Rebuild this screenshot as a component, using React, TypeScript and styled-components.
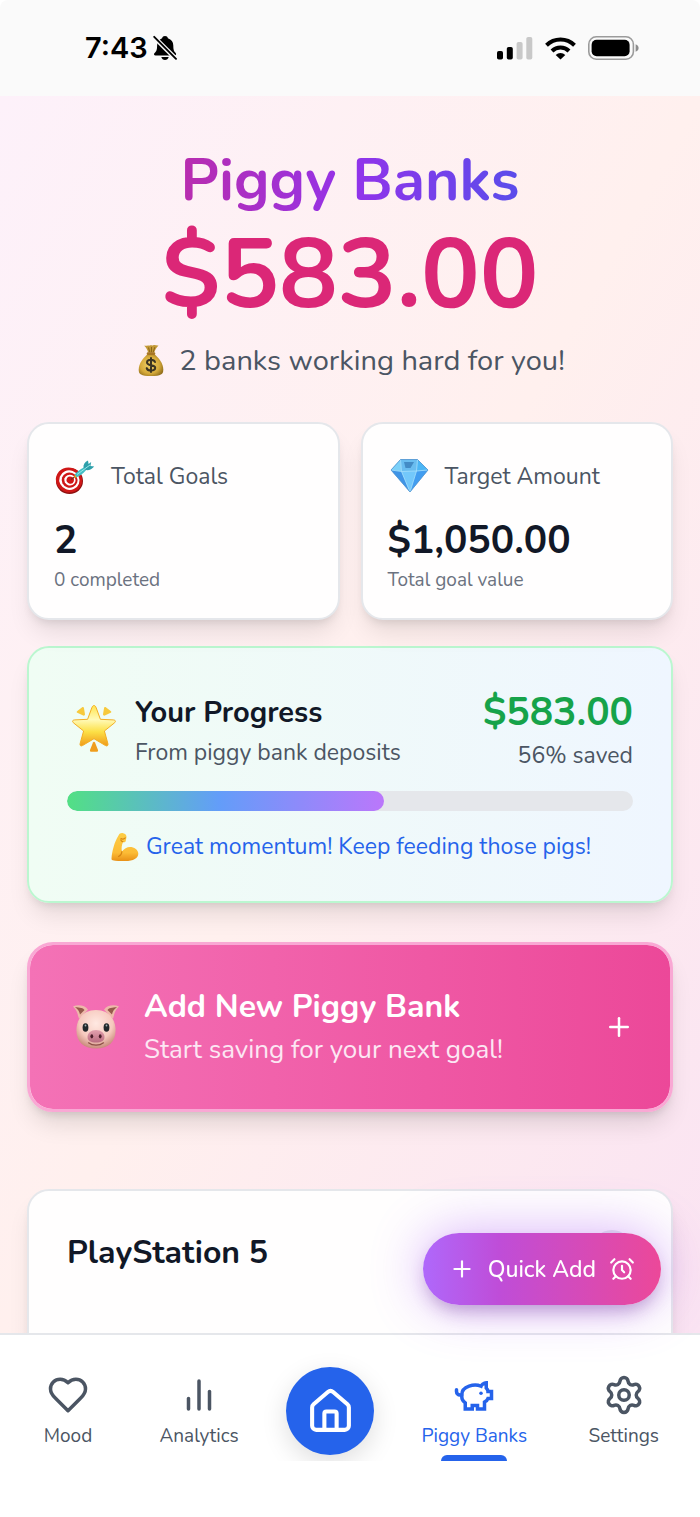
import React from "react";
import styled, { createGlobalStyle } from "styled-components";
import { AlarmClock, House, Plus, Settings } from "lucide-react";

const GlobalStyle = createGlobalStyle`
  *, *::before, *::after { box-sizing: border-box; }
  html, body { margin: 0; background: #ffffff; }
  body {
    font-family: Nunito, Lato, "Open Sans", sans-serif;
    color: #111827;
    -webkit-font-smoothing: antialiased;
  }
  h1, h2, p { margin: 0; }
  button { font: inherit; cursor: pointer; }
`;

const Screen = styled.div`
  display: flex;
  flex-direction: column;
  height: 100vh;
  overflow: hidden;
`;

const StatusBar = styled.header`
  flex: none;
  display: flex;
  align-items: center;
  justify-content: space-between;
  height: 96px;
  padding: 0 61px 0 85px;
  border-radius: 8px 8px 0 0;
  background: #fafafa;
  color: #000000;
`;

const StatusGroup = styled.div<{ $gap: number }>`
  display: flex;
  align-items: center;
  gap: ${(p) => p.$gap}px;
`;

const Time = styled.time`
  font: 600 29px/36px Inter, "Liberation Sans", sans-serif;
`;

const Content = styled.main`
  flex: 1;
  min-height: 0;
  overflow-y: auto;
  scrollbar-width: none;
  padding: 49px 27px 0;
  background: linear-gradient(to bottom right, #fdf1fa, #fff0ee 50%, #fae3f2);
`;

const Hero = styled.section`
  display: flex;
  flex-direction: column;
  text-align: center;
`;

const Title = styled.h1`
  font-size: 59px;
  line-height: 72px;
  font-weight: 700;
  background: linear-gradient(90deg, #db2777, #9333ea, #2563eb);
  background-clip: text;
  -webkit-background-clip: text;
  color: transparent;
`;

const Balance = styled.p`
  margin-top: 8px;
  font-size: 98px;
  line-height: 100px;
  font-weight: 700;
  color: #db2777;
`;

const Tagline = styled.p`
  display: flex;
  align-items: center;
  justify-content: center;
  gap: 14px;
  margin-top: 14px;
  font-size: 29px;
  line-height: 44px;
  color: #4b5563;
`;

const Card = styled.section`
  border: 2px solid #e5e7eb;
  border-radius: 22px;
  background: #fffefe;
  box-shadow: 0 16px 24px -5px rgba(0, 0, 0, 0.1), 0 6px 10px -4px rgba(0, 0, 0, 0.1);
`;

const Stats = styled.div`
  display: grid;
  grid-template-columns: 1fr 1fr;
  gap: 21px;
  margin-top: 39px;
`;

const StatCard = styled(Card)`
  padding: 25px 25px 24px;
`;

const StatHead = styled.div`
  display: flex;
  align-items: center;
  gap: 15px;
  height: 56px;
  margin-bottom: 11px;
`;

const Body = styled.p<{ $color?: string }>`
  font-size: 23px;
  line-height: 34px;
  color: ${(p) => p.$color ?? "#4b5563"};
`;

const Figure = styled.p<{ $color?: string }>`
  font-size: 39px;
  line-height: 50px;
  font-weight: 700;
  color: ${(p) => p.$color ?? "#111827"};
`;

const Caption = styled.p`
  font-size: 19px;
  line-height: 28px;
  color: #6b7280;
`;

const ProgressCard = styled(Card)`
  margin-top: 26px;
  padding: 40px 38px 37px;
  border-color: #bbf7d0;
  background: linear-gradient(90deg, #f0fdf4, #eff6ff);
`;

const Row = styled.div`
  display: flex;
  align-items: center;
  justify-content: space-between;
`;

const TopRow = styled(Row)`
  align-items: flex-start;
`;

const Lead = styled.div<{ $gap: number }>`
  display: flex;
  align-items: center;
  gap: ${(p) => p.$gap}px;
`;

const Stack = styled.div<{ $gap: number }>`
  display: flex;
  flex-direction: column;
  gap: ${(p) => p.$gap}px;
`;

const CardTitle = styled.h2<{ $size: number; $line?: number }>`
  font-size: ${(p) => p.$size}px;
  line-height: ${(p) => p.$line ?? 42}px;
  font-weight: 700;
`;

const Amounts = styled(Stack)`
  text-align: right;
`;

const Track = styled.div`
  height: 20px;
  margin-top: 18px;
  border-radius: 10px;
  overflow: hidden;
  background: #e5e7eb;
`;

const Fill = styled.div`
  height: 100%;
  border-radius: 10px;
  background: linear-gradient(90deg, #52e084, #639df9 48%, #bb77fb);
`;

const Cheer = styled.div`
  display: flex;
  align-items: center;
  justify-content: center;
  gap: 7px;
  margin-top: 19px;
`;

const AddButton = styled.button`
  display: flex;
  align-items: center;
  justify-content: space-between;
  width: 100%;
  margin-top: 39px;
  padding: 41px 36px 41px 37px;
  border: 3px solid #f9a8d4;
  border-radius: 26px;
  background: linear-gradient(90deg, #f472b6, #ec4899) padding-box;
  color: #ffffff;
  text-align: left;
  box-shadow: 0 16px 24px -5px rgba(0, 0, 0, 0.12), 0 6px 10px -4px rgba(0, 0, 0, 0.12);
`;

const AddHint = styled.p`
  font-size: 26px;
  line-height: 36px;
  color: #fce7f3;
`;

const GoalCard = styled(Card)`
  min-height: 400px;
  margin-top: 77px;
  padding: 39px 38px;
`;

const MoreButton = styled.button`
  width: 42px;
  height: 42px;
  border: 0;
  border-radius: 50%;
  background: #e5e7eb;
`;

const QuickAdd = styled.button`
  position: fixed;
  right: 39px;
  bottom: 212px;
  z-index: 2;
  display: flex;
  align-items: center;
  gap: 13px;
  height: 72px;
  padding: 0 26px;
  border: 0;
  border-radius: 36px;
  background: linear-gradient(90deg, #af68fb, #bf4dd8 32%, #ec4899);
  color: #ffffff;
  font-size: 23px;
  font-weight: 500;
  box-shadow: 0 10px 17px -4px rgba(80, 20, 120, 0.3), 0 0 52px rgba(168, 85, 247, 0.46);
`;

const Nav = styled.nav`
  flex: none;
  height: 184px;
  border-top: 2px solid #e5e7eb;
  background: #ffffff;
`;

const NavList = styled.div`
  display: flex;
  justify-content: space-between;
  height: 126px;
  padding: 0 27px 0 24px;
  overflow: hidden;
`;

const NavItem = styled.a<{ $active?: boolean }>`
  position: relative;
  display: flex;
  flex-direction: column;
  align-items: center;
  gap: 6px;
  min-width: 88px;
  padding: 39px 14px 0;
  font-size: 19px;
  line-height: 28px;
  text-decoration: none;
  white-space: nowrap;
  color: ${(p) => (p.$active ? "#2563eb" : "#4b5563")};
`;

const ActiveMark = styled.span`
  position: absolute;
  bottom: 0;
  left: 50%;
  width: 66px;
  height: 6px;
  margin-left: -33px;
  border-radius: 6px 6px 0 0;
  background: #2563eb;
`;

const HomeLink = styled.a`
  display: grid;
  place-items: center;
  width: 88px;
  height: 88px;
  margin-top: 32px;
  border-radius: 50%;
  background: #2563eb;
  color: #ffffff;
  box-shadow: 0 8px 26px rgba(0, 0, 0, 0.13);
`;

const Drawing = styled.svg`
  display: block;
  flex: none;
`;

const BellOffIcon = () => (
  <Drawing width="24" height="26" viewBox="0 0 24 26" aria-label="Silent">
    <path d="M12 1c1.600 0 2.600.9 2.900 2.200 3.600 1.200 5.400 3.800 5.400 7.200 0 4.600.9 6 2.200 7.400 1.100 1.100.7 2.700-1 2.700H2.600c-1.600 0-2.100-1.500-1-2.600C3.200 16.300 4.100 15 4.100 10.400c0-3.400 1.800-6 5-7.200C9.500 1.900 10.400 1 12 1zM8.300 22h7.400c-.5 1.900-1.900 3-3.700 3s-3.200-1.100-3.700-3z" fill="#000" />
    <path d="M.5 1.500 23 24" stroke="#fafafa" strokeWidth="4.500" />
    <path d="M1.200 1.800 23 23.800" stroke="#000" strokeWidth="1.900" strokeLinecap="round" />
  </Drawing>
);

const SignalIcon = () => (
  <Drawing width="36" height="23" viewBox="0 0 36 23" aria-label="Signal">
    <rect x="0" y="14" width="6" height="8.500" rx="1.800" />
    <rect x="9.800" y="10" width="6" height="12.500" rx="1.800" />
    <rect x="19.600" y="5" width="6" height="17.500" rx="1.800" fill="#c8c8c8" />
    <rect x="29.300" y="0" width="6" height="22.500" rx="1.800" fill="#c8c8c8" />
  </Drawing>
);

const WifiIcon = () => (
  <Drawing width="31" height="23" viewBox="0 0 31 23" fill="none" stroke="#000" strokeWidth="4" aria-label="Wi-Fi">
    <path d="M1.500 8.200a20 20 0 0 1 28 0" />
    <path d="M7 14a12.200 12.200 0 0 1 17 0" />
    <path d="M15.500 22.600 10.700 17.900a7 7 0 0 1 9.600 0z" fill="#000" stroke="none" />
  </Drawing>
);

const BatteryIcon = () => (
  <Drawing width="51" height="24" viewBox="0 0 51 24" aria-label="Battery">
    <rect x=".8" y=".8" width="44.600" height="22.400" rx="7.500" fill="none" stroke="#9b9b9b" strokeWidth="1.600" />
    <rect x="3.600" y="3.800" width="38" height="16.400" rx="5" />
    <path d="M47.600 8.200c2 .8 3 2.200 3 3.800s-1 3-3 3.800z" fill="#8c8c8c" />
  </Drawing>
);

const MoneyBag = () => (
  <Drawing width="30" height="34" viewBox="-1 1 30 34" aria-hidden="true">
    <defs>
      <radialGradient id="bag" cx=".45" cy=".5" r=".6">
        <stop offset="0" stopColor="#f1d268" />
        <stop offset=".65" stopColor="#d5a93a" />
        <stop offset="1" stopColor="#94701c" />
      </radialGradient>
    </defs>
    <path d="M8 2.500c2 1 3.500-.8 5.300.2 1.400-1.200 3 .4 4.500-.6 1.500-.3 3 .7 4.700.3-2.300 2.200-3.600 4.500-4.200 7.100h-6.200C11.500 6.800 10.200 4.400 8 2.500z" fill="#c39936" />
    <path d="M12.500 4.500l1.400 5M15.500 4l-.1 5.500M18.800 4.200l-1.700 5.300" stroke="#8a6418" strokeWidth="1" />
    <path d="M12 11c-5 3.800-9.300 9.500-9.300 15.800C2.700 31.500 5 33 15 33s12.300-1.500 12.300-6.200C27.300 20.500 23 14.800 18 11z" fill="url(#bag)" />
    <rect x="10.700" y="9.300" width="8.600" height="2.700" rx="1.300" fill="#a87624" />
    <path d="M15 15v14M19 19c-.6-1.500-2-2.200-4-2.200-2.300 0-4 1-4 2.700 0 4 8.200 1.500 8.200 5.300 0 1.800-1.700 2.800-4.200 2.800-2.200 0-3.800-.8-4.300-2.500" fill="none" stroke="#3c3422" strokeWidth="2" strokeLinecap="round" />
  </Drawing>
);

const TargetArt = () => (
  <Drawing width="42" height="42" viewBox="0 -4 42 42" aria-hidden="true">
    <ellipse cx="15.500" cy="21" rx="13.500" ry="13" fill="#8e1010" />
    <g transform="rotate(20 15 20)">
      <ellipse cx="15" cy="20" rx="13.200" ry="12.500" fill="#cf1717" />
      <ellipse cx="15.400" cy="20" rx="10.200" ry="9.700" fill="#fff" />
      <ellipse cx="15.600" cy="19.900" rx="8" ry="7.600" fill="#cf1717" />
      <ellipse cx="15.900" cy="19.800" rx="5.700" ry="5.400" fill="#fff" />
      <ellipse cx="16.200" cy="19.700" rx="3.700" ry="3.500" fill="#cf1717" />
    </g>
    <path d="M17 19.500 22 16" stroke="#7a2222" strokeWidth="1.500" />
    <path d="M20.800 14.500c1.500-2.300 5-5 9.200-7l2 2.700c-3 3.500-6.700 6-9.800 7.300z" fill="#43bfc5" />
    <path d="M20.800 14.500l-.8 3.500 2.700-.8z" fill="#e9b326" />
    <path d="M29.500 8c-.4-3.600 1.300-6 4.500-7.500l.6 3.500 2.600-1.900-.8 4 3.800.5c-2.300 2.900-5.200 4-8.700 3.500z" fill="#2ea0ab" />
    <path d="M23 14.500 36 5" stroke="#9be8e9" strokeWidth="1" />
  </Drawing>
);

const Gem = () => (
  <Drawing width="42" height="42" viewBox="0 1 42 42" aria-hidden="true">
    <path d="M12.500 4.500h17L40 15 22 37 3 15z" fill="#4aa9f0" />
    <path d="M12.500 4.500 3 15l10.500 1.500z" fill="#7bd0f8" />
    <path d="M12.500 4.500h17L28.500 16l-15 .5z" fill="#69bdf0" />
    <path d="M16 7h10l-3.500 6h-5z" fill="#438cc6" />
    <path d="M29.500 4.500 40 15l-11.500 1z" fill="#4cb6f5" />
    <path d="M3 15l10.500 1.500L22 37z" fill="#3f94e6" />
    <path d="M13.500 16.500 28.500 16 22 37z" fill="#73c8fb" />
    <path d="M28.500 16 40 15 22 37z" fill="#429df0" />
    <path d="M3 15l10.500 1.500L28.500 16 40 15M13.500 16.500 22 37l6.500-21M12.500 4.500l1 12M29.500 4.500l-1 11.500" fill="none" stroke="#a8e1fd" strokeWidth=".8" />
    <path d="M12.500 4.500h17L40 15 22 37 3 15z" fill="none" stroke="#5796cf" strokeWidth=".8" strokeLinejoin="round" />
  </Drawing>
);

const GlowingStar = () => (
  <Drawing width="52" height="52" viewBox="0 3 52 52" aria-hidden="true">
    <defs>
      <linearGradient id="star" x1="0" y1="0" x2="0" y2="1">
        <stop offset="0" stopColor="#ffe54f" />
        <stop offset=".35" stopColor="#fffab8" />
        <stop offset=".65" stopColor="#fce046" />
        <stop offset="1" stopColor="#f09a1a" />
      </linearGradient>
    </defs>
    <path d="M27 3.500c1 0 1.600.8 2.200 2.300l4.200 11.500 12.800.6c2.600.2 2.900 1.700 1 3.200L37.400 29l3.500 12.600c.5 2-.8 3-2.500 1.900L27 36.700l-11.400 6.800c-1.700 1.100-3 .1-2.500-1.900L16.600 29 6.800 21.100c-1.900-1.500-1.600-3 1-3.200l12.800-.6 4.200-11.500c.6-1.500 1.200-2.300 2.200-2.300z" fill="url(#star)" stroke="#f3ae25" strokeWidth="1" />
    <path d="M10 9.200 15.500 5c.7-.3 1.200 0 1.400.7L18 12.300c0 1-.9 1.600-1.800 1.300l-5.900-2.900c-.7-.4-.8-1-.3-1.500zM44 9.200 38.500 5c-.7-.3-1.200 0-1.400.7L36 12.300c0 1 .9 1.600 1.800 1.300l5.900-2.900c.7-.4.8-1 .3-1.500z" fill="#f7c93c" />
    <path d="M26 40.500c.6-1 1.400-1 2 0l3 7.500c.3 1.200-.2 1.800-1.500 1.800h-5c-1.300 0-1.800-.6-1.500-1.800z" fill="#ef9d1d" />
  </Drawing>
);

const Muscle = () => (
  <Drawing width="30" height="32" viewBox="-1 0 30 32" aria-hidden="true">
    <defs>
      <linearGradient id="arm" x1="0" y1="0" x2="0" y2="1">
        <stop offset="0" stopColor="#fdcd45" />
        <stop offset=".7" stopColor="#fcbc36" />
        <stop offset="1" stopColor="#e89016" />
      </linearGradient>
    </defs>
    <path d="M8.500 4.500C9.500 2.300 11.200 1.700 13.200 2.200c2.100.4 3.400 1.800 3.300 3.700l-.7 3.800c-.3 1.400-1.500 2-2.700 1.400-1.500 3-1.800 6.300-1.200 9.500 2.400-3.500 6-5.100 9.600-4.500 4.200.8 6.800 3.500 6.800 6.700 0 4.500-5 7.300-13 7.300-5 0-9.600-.3-12.600-.9-.8-.2-1.200-.9-1.200-1.800C2 20.600 4.500 10.500 8.500 4.500z" fill="url(#arm)" />
    <path d="M11 7.500c1.500 1 3.200.6 4.300-.6M13 10.800c-1.200-.4-2-1.100-2.200-2M11.900 20.600c-.2 2.500-1.200 4-3.400 5" fill="none" stroke="#d68413" strokeWidth="1.100" strokeLinecap="round" />
  </Drawing>
);

const PigFace = () => (
  <Drawing width="56" height="56" viewBox="0 1 56 56" aria-hidden="true">
    <defs>
      <radialGradient id="pig" cx=".5" cy=".35" r=".65">
        <stop offset="0" stopColor="#ffe9e2" />
        <stop offset=".65" stopColor="#f6c9be" />
        <stop offset="1" stopColor="#c98b7c" />
      </radialGradient>
      <linearGradient id="snout" x1="0" y1="0" x2="0" y2="1">
        <stop offset="0" stopColor="#e3a0ae" />
        <stop offset="1" stopColor="#b96c80" />
      </linearGradient>
    </defs>
    <path d="M6 8.500c5-2.300 12.500-1 15 3.200l-9 9C10.600 17 11 13.500 6 8.500zM52 8.500c-5-2.300-12.500-1-15 3.200l9 9C47.400 17 47 13.500 52 8.500z" fill="#edb9aa" />
    <path d="M8 9.200c5 0 8.500 1 9.500 2.800l-4.500 4.500c-.5-3-2-5.300-5-7.300zM50 9.200c-5 0-8.500 1-9.500 2.800l4.500 4.500c.5-3 2-5.300 5-7.300z" fill="#96594b" />
    <path d="M29 12c11 0 18.500 7 19.500 18 .9 12.500-6 20.500-19.500 20.500S8.600 42.500 9.500 30C10.500 19 18 12 29 12z" fill="url(#pig)" />
    <ellipse cx="18.500" cy="29.500" rx="2.900" ry="4.300" fill="#22282b" />
    <ellipse cx="39.500" cy="29.500" rx="2.900" ry="4.300" fill="#22282b" />
    <circle cx="18.500" cy="27.500" r=".9" fill="#9caeb4" />
    <circle cx="39.500" cy="27.500" r=".9" fill="#9caeb4" />
    <path d="M29 32c5 0 8.500 3 8.500 7s-3.500 5.500-8.500 5.500-8.500-1.500-8.500-5.500 3.500-7 8.500-7z" fill="url(#snout)" />
    <ellipse cx="24.800" cy="38.300" rx="1.400" ry="2.100" fill="#4d1e2b" />
    <ellipse cx="33.200" cy="38.300" rx="1.400" ry="2.100" fill="#4d1e2b" />
    <path d="M21.500 44.800c4 3.200 11 3.200 15 0" fill="none" stroke="#8d4f47" strokeWidth="1.200" strokeLinecap="round" />
  </Drawing>
);

const LineIcon = ({ paths }: { paths: string[] }) => (
  <Drawing width="42" height="42" viewBox="0 0 24 24" fill="none" stroke="currentColor" strokeWidth="2" strokeLinecap="round" strokeLinejoin="round" aria-hidden="true">
    {paths.map((d) => (
      <path key={d} d={d} />
    ))}
  </Drawing>
);

const heart = ["M19 14c1.490-1.460 3-3.210 3-5.500A5.500 5.500 0 0 0 16.500 3c-1.760 0-3 .5-4.500 2-1.500-1.500-2.740-2-4.500-2A5.500 5.500 0 0 0 2 8.500c0 2.300 1.500 4.050 3 5.500l7 7Z"];
const bars = ["M18 20V10", "M12 20V4", "M6 20v-6"];

const PiggyIcon = () => (
  <Drawing width="42" height="42" viewBox="0 0 24 24" fill="none" stroke="currentColor" strokeWidth="2" strokeLinecap="round" aria-hidden="true">
    <path d="M19 5c-1.500 0-2.800 1.400-3 2-3.500-1.500-11-.3-11 5 0 1.800 0 3 2 4.500V20h4v-2h3v2h4v-4c1-.5 1.700-1 2-2h2v-4h-2c0-1-.5-1.500-1-2V5z" />
    <path d="M2 9v1c0 1.100.9 2 2 2h1" />
    <path d="M16 11h0" />
  </Drawing>
);

export default function App() {
  const saved = 56;
  return (
    <>
      <GlobalStyle />
      <Screen>
        <StatusBar>
          <StatusGroup $gap={5}>
            <Time>7:43</Time>
            <BellOffIcon />
          </StatusGroup>
          <StatusGroup $gap={12}>
            <SignalIcon />
            <WifiIcon />
            <BatteryIcon />
          </StatusGroup>
        </StatusBar>

        <Content>
          <Hero>
            <Title>Piggy Banks</Title>
            <Balance>$583.00</Balance>
            <Tagline>
              <MoneyBag />
              2 banks working hard for you!
            </Tagline>
          </Hero>

          <Stats>
            <StatCard>
              <StatHead>
                <TargetArt />
                <Body>Total Goals</Body>
              </StatHead>
              <Figure>2</Figure>
              <Caption>0 completed</Caption>
            </StatCard>
            <StatCard>
              <StatHead>
                <Gem />
                <Body>Target Amount</Body>
              </StatHead>
              <Figure>$1,050.00</Figure>
              <Caption>Total goal value</Caption>
            </StatCard>
          </Stats>

          <ProgressCard>
            <Row>
              <Lead $gap={16}>
                <GlowingStar />
                <Stack $gap={2}>
                  <CardTitle $size={29}>Your Progress</CardTitle>
                  <Body>From piggy bank deposits</Body>
                </Stack>
              </Lead>
              <Amounts $gap={1}>
                <Figure $color="#16a34a">$583.00</Figure>
                <Body>{saved}% saved</Body>
              </Amounts>
            </Row>
            <Track role="progressbar" aria-valuenow={saved} aria-valuemin={0} aria-valuemax={100} aria-label="Savings progress">
              <Fill style={{ width: `${saved}%` }} />
            </Track>
            <Cheer>
              <Muscle />
              <Body $color="#2563eb">Great momentum! Keep feeding those pigs!</Body>
            </Cheer>
          </ProgressCard>

          <AddButton type="button">
            <Lead $gap={21}>
              <PigFace />
              <Stack $gap={4}>
                <CardTitle $size={32}>Add New Piggy Bank</CardTitle>
                <AddHint>Start saving for your next goal!</AddHint>
              </Stack>
            </Lead>
            <Plus size={30} strokeWidth={2} />
          </AddButton>

          <GoalCard>
            <TopRow>
              <CardTitle $size={32} $line={46}>PlayStation 5</CardTitle>
              <MoreButton type="button" aria-label="Goal options" />
            </TopRow>
          </GoalCard>
        </Content>

        <QuickAdd type="button">
          <Plus size={26} />
          Quick Add
          <AlarmClock size={26} />
        </QuickAdd>

        <Nav aria-label="Main">
          <NavList>
            <NavItem href="#mood">
              <LineIcon paths={heart} />
              Mood
            </NavItem>
            <NavItem href="#analytics">
              <LineIcon paths={bars} />
              Analytics
            </NavItem>
            <HomeLink href="#home" aria-label="Home">
              <House size={49} strokeWidth={2} />
            </HomeLink>
            <NavItem href="#piggy-banks" $active aria-current="page">
              <PiggyIcon />
              Piggy Banks
              <ActiveMark />
            </NavItem>
            <NavItem href="#settings">
              <Settings size={42} />
              Settings
            </NavItem>
          </NavList>
        </Nav>
      </Screen>
    </>
  );
}
